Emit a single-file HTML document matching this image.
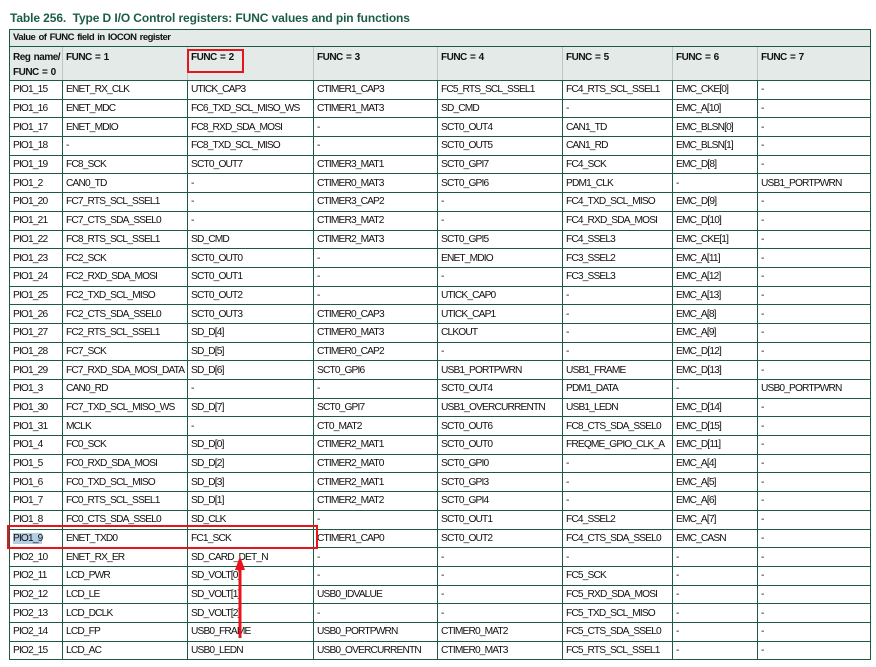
<!DOCTYPE html>
<html><head><meta charset="utf-8"><style>
body{margin:0;width:876px;height:667px;background:#fff;position:relative;overflow:hidden;font-family:"Liberation Sans",Arial,sans-serif;}
.t{position:absolute;left:10px;top:11px;font-size:12px;font-weight:bold;color:#1d5c48;letter-spacing:-0.1px}
table{position:absolute;left:9px;top:29px;border-collapse:collapse;table-layout:fixed;width:861px}
td{border:1.3px solid #1e5a40;font-size:10.2px;letter-spacing:-0.85px;word-spacing:1px;color:#111;padding:0 0 0 3px;height:17.7px;white-space:nowrap;overflow:hidden;vertical-align:middle}
tr.h td{background:#e3eae7;font-weight:bold;vertical-align:top;padding-top:3px;border-left-color:#b9c9c1;border-right-color:#b9c9c1;letter-spacing:-0.5px}
tr.h td:first-child{border-left-color:#1e5a40}tr.h td:last-child{border-right-color:#1e5a40}
tr.h1 td{height:14px;padding-top:2px;font-weight:bold;background:#e3eae7;font-size:9.5px}
tr.h2 td{height:29px;font-size:10px;line-height:15px}
.box{position:absolute;border:2.5px solid #e8141c}
</style></head><body>
<div class="t">Table 256.&nbsp; Type D I/O Control registers: FUNC values and pin functions</div>
<table>
<colgroup><col style="width:53px"><col style="width:125px"><col style="width:126px"><col style="width:124px"><col style="width:125px"><col style="width:110px"><col style="width:85px"><col style="width:113px"></colgroup>
<tr class="h h1"><td colspan="8">Value of FUNC field in IOCON register</td></tr>
<tr class="h h2"><td>Reg name/<br>FUNC = 0</td><td>FUNC = 1</td><td>FUNC = 2</td><td>FUNC = 3</td><td>FUNC = 4</td><td>FUNC = 5</td><td>FUNC = 6</td><td>FUNC = 7</td></tr>
<tr><td>PIO1_15</td><td>ENET_RX_CLK</td><td>UTICK_CAP3</td><td>CTIMER1_CAP3</td><td>FC5_RTS_SCL_SSEL1</td><td>FC4_RTS_SCL_SSEL1</td><td>EMC_CKE[0]</td><td>-</td></tr>
<tr><td>PIO1_16</td><td>ENET_MDC</td><td>FC6_TXD_SCL_MISO_WS</td><td>CTIMER1_MAT3</td><td>SD_CMD</td><td>-</td><td>EMC_A[10]</td><td>-</td></tr>
<tr><td>PIO1_17</td><td>ENET_MDIO</td><td>FC8_RXD_SDA_MOSI</td><td>-</td><td>SCT0_OUT4</td><td>CAN1_TD</td><td>EMC_BLSN[0]</td><td>-</td></tr>
<tr><td>PIO1_18</td><td>-</td><td>FC8_TXD_SCL_MISO</td><td>-</td><td>SCT0_OUT5</td><td>CAN1_RD</td><td>EMC_BLSN[1]</td><td>-</td></tr>
<tr><td>PIO1_19</td><td>FC8_SCK</td><td>SCT0_OUT7</td><td>CTIMER3_MAT1</td><td>SCT0_GPI7</td><td>FC4_SCK</td><td>EMC_D[8]</td><td>-</td></tr>
<tr><td>PIO1_2</td><td>CAN0_TD</td><td>-</td><td>CTIMER0_MAT3</td><td>SCT0_GPI6</td><td>PDM1_CLK</td><td>-</td><td>USB1_PORTPWRN</td></tr>
<tr><td>PIO1_20</td><td>FC7_RTS_SCL_SSEL1</td><td>-</td><td>CTIMER3_CAP2</td><td>-</td><td>FC4_TXD_SCL_MISO</td><td>EMC_D[9]</td><td>-</td></tr>
<tr><td>PIO1_21</td><td>FC7_CTS_SDA_SSEL0</td><td>-</td><td>CTIMER3_MAT2</td><td>-</td><td>FC4_RXD_SDA_MOSI</td><td>EMC_D[10]</td><td>-</td></tr>
<tr><td>PIO1_22</td><td>FC8_RTS_SCL_SSEL1</td><td>SD_CMD</td><td>CTIMER2_MAT3</td><td>SCT0_GPI5</td><td>FC4_SSEL3</td><td>EMC_CKE[1]</td><td>-</td></tr>
<tr><td>PIO1_23</td><td>FC2_SCK</td><td>SCT0_OUT0</td><td>-</td><td>ENET_MDIO</td><td>FC3_SSEL2</td><td>EMC_A[11]</td><td>-</td></tr>
<tr><td>PIO1_24</td><td>FC2_RXD_SDA_MOSI</td><td>SCT0_OUT1</td><td>-</td><td>-</td><td>FC3_SSEL3</td><td>EMC_A[12]</td><td>-</td></tr>
<tr><td>PIO1_25</td><td>FC2_TXD_SCL_MISO</td><td>SCT0_OUT2</td><td>-</td><td>UTICK_CAP0</td><td>-</td><td>EMC_A[13]</td><td>-</td></tr>
<tr><td>PIO1_26</td><td>FC2_CTS_SDA_SSEL0</td><td>SCT0_OUT3</td><td>CTIMER0_CAP3</td><td>UTICK_CAP1</td><td>-</td><td>EMC_A[8]</td><td>-</td></tr>
<tr><td>PIO1_27</td><td>FC2_RTS_SCL_SSEL1</td><td>SD_D[4]</td><td>CTIMER0_MAT3</td><td>CLKOUT</td><td>-</td><td>EMC_A[9]</td><td>-</td></tr>
<tr><td>PIO1_28</td><td>FC7_SCK</td><td>SD_D[5]</td><td>CTIMER0_CAP2</td><td>-</td><td>-</td><td>EMC_D[12]</td><td>-</td></tr>
<tr><td>PIO1_29</td><td>FC7_RXD_SDA_MOSI_DATA</td><td>SD_D[6]</td><td>SCT0_GPI6</td><td>USB1_PORTPWRN</td><td>USB1_FRAME</td><td>EMC_D[13]</td><td>-</td></tr>
<tr><td>PIO1_3</td><td>CAN0_RD</td><td>-</td><td>-</td><td>SCT0_OUT4</td><td>PDM1_DATA</td><td>-</td><td>USB0_PORTPWRN</td></tr>
<tr><td>PIO1_30</td><td>FC7_TXD_SCL_MISO_WS</td><td>SD_D[7]</td><td>SCT0_GPI7</td><td>USB1_OVERCURRENTN</td><td>USB1_LEDN</td><td>EMC_D[14]</td><td>-</td></tr>
<tr><td>PIO1_31</td><td>MCLK</td><td>-</td><td>CT0_MAT2</td><td>SCT0_OUT6</td><td>FC8_CTS_SDA_SSEL0</td><td>EMC_D[15]</td><td>-</td></tr>
<tr><td>PIO1_4</td><td>FC0_SCK</td><td>SD_D[0]</td><td>CTIMER2_MAT1</td><td>SCT0_OUT0</td><td>FREQME_GPIO_CLK_A</td><td>EMC_D[11]</td><td>-</td></tr>
<tr><td>PIO1_5</td><td>FC0_RXD_SDA_MOSI</td><td>SD_D[2]</td><td>CTIMER2_MAT0</td><td>SCT0_GPI0</td><td>-</td><td>EMC_A[4]</td><td>-</td></tr>
<tr><td>PIO1_6</td><td>FC0_TXD_SCL_MISO</td><td>SD_D[3]</td><td>CTIMER2_MAT1</td><td>SCT0_GPI3</td><td>-</td><td>EMC_A[5]</td><td>-</td></tr>
<tr><td>PIO1_7</td><td>FC0_RTS_SCL_SSEL1</td><td>SD_D[1]</td><td>CTIMER2_MAT2</td><td>SCT0_GPI4</td><td>-</td><td>EMC_A[6]</td><td>-</td></tr>
<tr><td>PIO1_8</td><td>FC0_CTS_SDA_SSEL0</td><td>SD_CLK</td><td>-</td><td>SCT0_OUT1</td><td>FC4_SSEL2</td><td>EMC_A[7]</td><td>-</td></tr>
<tr><td><span style="background:#b3cde2">PIO1_9</span></td><td>ENET_TXD0</td><td>FC1_SCK</td><td>CTIMER1_CAP0</td><td>SCT0_OUT2</td><td>FC4_CTS_SDA_SSEL0</td><td>EMC_CASN</td><td>-</td></tr>
<tr><td>PIO2_10</td><td>ENET_RX_ER</td><td>SD_CARD_DET_N</td><td>-</td><td>-</td><td>-</td><td>-</td><td>-</td></tr>
<tr><td>PIO2_11</td><td>LCD_PWR</td><td>SD_VOLT[0]</td><td>-</td><td>-</td><td>FC5_SCK</td><td>-</td><td>-</td></tr>
<tr><td>PIO2_12</td><td>LCD_LE</td><td>SD_VOLT[1]</td><td>USB0_IDVALUE</td><td>-</td><td>FC5_RXD_SDA_MOSI</td><td>-</td><td>-</td></tr>
<tr><td>PIO2_13</td><td>LCD_DCLK</td><td>SD_VOLT[2]</td><td>-</td><td>-</td><td>FC5_TXD_SCL_MISO</td><td>-</td><td>-</td></tr>
<tr><td>PIO2_14</td><td>LCD_FP</td><td>USB0_FRAME</td><td>USB0_PORTPWRN</td><td>CTIMER0_MAT2</td><td>FC5_CTS_SDA_SSEL0</td><td>-</td><td>-</td></tr>
<tr><td>PIO2_15</td><td>LCD_AC</td><td>USB0_LEDN</td><td>USB0_OVERCURRENTN</td><td>CTIMER0_MAT3</td><td>FC5_RTS_SCL_SSEL1</td><td>-</td><td>-</td></tr>
</table>
<div class="box" style="left:187px;top:49px;width:53px;height:20px"></div>
<div class="box" style="left:7px;top:525px;width:307px;height:20px"></div>
<svg style="position:absolute;left:0;top:0" width="876" height="667"><line x1="240" y1="638" x2="240" y2="566" stroke="#e8141c" stroke-width="3"/><polygon points="240,556 235,570 245,570" fill="#e8141c"/></svg>
</body></html>
